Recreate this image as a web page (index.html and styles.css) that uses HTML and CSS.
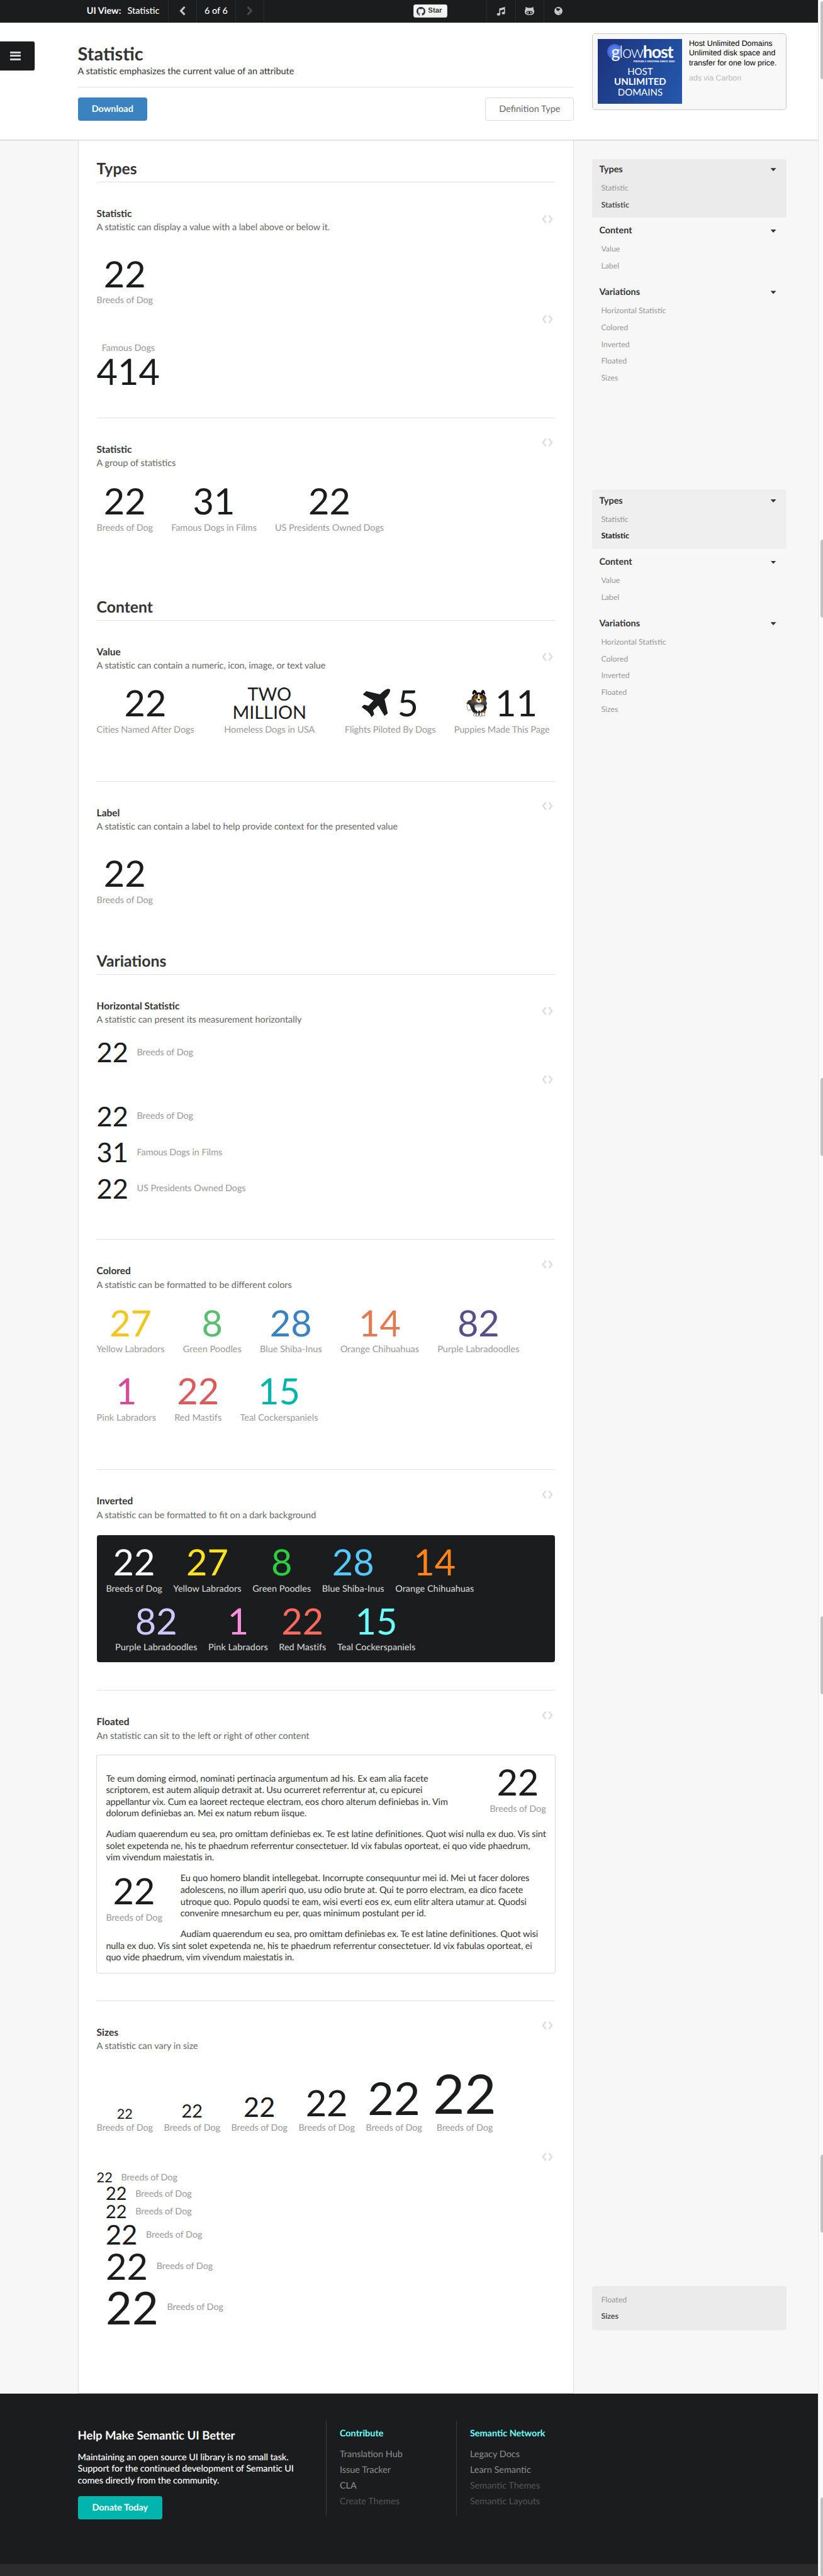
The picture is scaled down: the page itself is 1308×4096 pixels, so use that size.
FILE: index.html
```html
<!DOCTYPE html>
<html lang="en">
<head>
<meta charset="utf-8">
<title>Statistic | Semantic UI</title>
<link rel="stylesheet" href="styles.css">
</head>
<body>
<svg width="0" height="0" class="defs">
  <symbol id="code" viewBox="0 0 18 13"><path d="M6.700 .5 2 6.500l4.700 6M11.300 .5l4.700 6-4.700 6" fill="none" stroke="#dfdfdf" stroke-width="2.700"/></symbol>
</svg>
<div class="page">
  <nav class="topbar">
    <div class="view"><b>UI View:</b><span>Statistic</span></div>
    <div class="cell prev"><svg width="10" height="15" viewBox="0 0 10 15"><path d="M8.5 1 2.5 7.2l6 6.2" fill="none" stroke="#c9c9c9" stroke-width="3"/></svg></div>
    <div class="cell count">6 of 6</div>
    <div class="cell next"><svg width="10" height="15" viewBox="0 0 10 15"><path d="m1.5 1 6 6.2-6 6.2" fill="none" stroke="#4a4a4b" stroke-width="3"/></svg></div>
    <div class="star"><svg width="14" height="14" viewBox="0 0 16 16"><path fill="#333" d="M8 0C3.58 0 0 3.58 0 8c0 3.54 2.29 6.53 5.47 7.59.4.07.55-.17.55-.38 0-.19-.01-.82-.01-1.49-2.01.37-2.53-.49-2.69-.94-.09-.23-.48-.94-.82-1.13-.28-.15-.68-.52-.01-.53.63-.01 1.08.58 1.23.82.72 1.21 1.87.87 2.33.66.07-.52.28-.87.51-1.07-1.78-.2-3.64-.89-3.64-3.95 0-.87.31-1.59.82-2.15-.08-.2-.36-1.02.08-2.12 0 0 .67-.21 2.2.82.64-.18 1.32-.27 2-.27s1.36.09 2 .27c1.53-1.04 2.2-.82 2.2-.82.44 1.1.16 1.92.08 2.12.51.56.82 1.27.82 2.15 0 3.07-1.87 3.75-3.65 3.95.29.25.54.73.54 1.48 0 1.07-.01 1.93-.01 2.2 0 .21.15.46.55.38A8.01 8.01 0 0 0 16 8c0-4.42-3.58-8-8-8z"/></svg>Star</div>
    <div class="cell tool first"><svg width="14" height="14" viewBox="0 0 14 14"><path fill="#c9c9c9" d="M4.5 2.6 13.6 0v9.8a2.6 1.9 0 1 1-1.6-1.7V4L6.1 5.6v6.3a2.7 1.9 0 1 1-1.6-1.8z"/></svg></div>
    <div class="cell tool"><svg width="15" height="13" viewBox="0 0 15 13"><path fill="#c9c9c9" fill-rule="evenodd" d="M1.5 0 5 1.5h5L13.500 0l.5 3.700Q15 5 15 7.500 15 13 7.500 13T0 7.500Q0 5 1 3.700zM4.500 6.500Q2.500 6.500 2.500 9t5 2.800q5 0 5-2.800t-2-2.500z"/><path fill="#c9c9c9" d="M4.300 7.500h1.700v3h-1.700zM9 7.500h1.700v3H9z"/></svg></div>
    <div class="cell tool"><svg width="13" height="13" viewBox="0 0 13 13"><circle cx="6.500" cy="6.500" r="6.500" fill="#c9c9c9"/><path fill="#1b1c1d" d="m3 2.300 3-.5 1 1.200 2-.8.3 2-2.200 1.300L6.500 7 5.200 6 3.300 4.500zM8 9.500l1.700-.3L8.500 11.500z"/></svg></div>
  </nav>

  <header class="masthead">
    <button class="burger" aria-label="Menu"><i></i><i></i><i></i></button>
    <div class="intro">
      <h1>Statistic</h1>
      <p>A statistic emphasizes the current value of an attribute</p>
      <div class="actions"><a class="btn blue">Download</a><a class="btn outline">Definition Type</a></div>
    </div>
    <aside class="ad">
      <div class="banner">
        <div class="brand"><i class="orb"></i><span class="g">g</span><span class="low">low</span><b>host</b></div>
        <small>PROUDLY HOSTING SINCE 2002</small>
        <div class="pitch">HOST<b>UNLIMITED</b>DOMAINS</div>
      </div>
      <div class="copy">Host Unlimited Domains<br>Unlimited disk space and<br>transfer for one low price.<em>ads via Carbon</em></div>
    </aside>
  </header>

  <div class="body">
    <main>
      <h2>Types</h2>
      <section class="lead s1">
        <svg class="code"><use href="#code"/></svg>
        <h4>Statistic</h4><p class="desc">A statistic can display a value with a label above or below it.</p>
        <div class="stats"><div class="stat"><div class="value">22</div><div class="label">Breeds of Dog</div></div></div>
        <div class="again"><svg class="code"><use href="#code"/></svg>
          <div class="stats"><div class="stat above"><div class="label">Famous Dogs</div><div class="value">414</div></div></div></div>
      </section>
      <section class="s2">
        <svg class="code"><use href="#code"/></svg>
        <h4>Statistic</h4><p class="desc">A group of statistics</p>
        <div class="stats">
          <div class="stat"><div class="value">22</div><div class="label">Breeds of Dog</div></div>
          <div class="stat"><div class="value">31</div><div class="label">Famous Dogs in Films</div></div>
          <div class="stat"><div class="value">22</div><div class="label">US Presidents Owned Dogs</div></div>
        </div>
      </section>

      <h2>Content</h2>
      <section class="lead s3">
        <svg class="code"><use href="#code"/></svg>
        <h4>Value</h4><p class="desc">A statistic can contain a numeric, icon, image, or text value</p>
        <div class="stats">
          <div class="stat"><div class="value">22</div><div class="label">Cities Named After Dogs</div></div>
          <div class="stat wide"><div class="value text">TWO<br>MILLION</div><div class="label">Homeless Dogs in USA</div></div>
          <div class="stat"><div class="value"><svg class="plane" viewBox="23 65 264 266"><path fill="#1b1c1d" d="M265 66Q287 64 286 84 284 112 234 162L264 295 234 319 175 222 127 267 137 305 113 330Q95 294 75 278 50 258 23 240V234L44 215 84 225 131 176 34 120V116L64 88 191 118Q240 68 265 66Z"/></svg>5</div><div class="label">Flights Piloted By Dogs</div></div>
          <div class="stat"><div class="value"><svg class="dog" viewBox="995 76 196 254">
            <defs>
              <linearGradient id="chest" x2="0" y2="1"><stop offset="0" stop-color="#777"/><stop offset=".55" stop-color="#fff"/></linearGradient>
              <linearGradient id="tail" x2="0" y2="1"><stop offset="0" stop-color="#6b4212"/><stop offset=".5" stop-color="#222"/></linearGradient>
              <linearGradient id="coat" x2="0" y2="1"><stop offset="0" stop-color="#050505"/><stop offset=".4" stop-color="#555"/><stop offset=".6" stop-color="#222"/></linearGradient>
            </defs>
            <path fill="url(#tail)" d="M1045 170Q1012 172 1004 195L996 208 1006 212 1000 235 1050 262 1060 220Z"/>
            <path fill="#fff" stroke="#333" stroke-width="2" d="M1003 214 999 238 1006 236 1004 262 1012 256 1014 278 1024 262 1034 276 1030 262 1044 268 1030 226 1016 210Z"/>
            <path fill="url(#coat)" d="M1060 130Q1040 150 1044 180 1034 210 1045 240L1042 262 1058 290 1075 294 1112 318 1150 290 1168 284 1186 248 1180 225 1189 208 1178 175 1184 168Q1182 140 1165 128L1140 106 1085 106Z"/>
            <path fill="#0a0a0a" d="M1064 122 1050 118Q1054 84 1071 78L1090 90 1096 112ZM1164 130 1172 118Q1166 84 1150 78L1136 90 1130 112ZM1096 114 1104 100 1110 106 1114 99 1120 108 1128 114Z"/>
            <path fill="#e7a3a3" d="m1064 130 4-17 8-6 4 14zM1150 122l4-14 9 7 2 15z"/>
            <path fill="#a8660f" d="M1070 152Q1074 124 1096 126L1112 150 1128 126Q1150 128 1154 156 1156 182 1136 196H1086Q1066 182 1070 152Z"/>
            <path fill="#fff" d="M1107 118 1102 160Q1086 170 1090 186 1100 202 1114 200 1136 198 1136 180 1134 166 1122 160L1117 118Z"/>
            <circle cx="1090" cy="146" r="10"/><circle cx="1135" cy="146" r="10"/>
            <circle cx="1087" cy="143" r="3" fill="#fff"/><circle cx="1132" cy="143" r="3" fill="#fff"/>
            <ellipse cx="1112" cy="170" rx="10" ry="8"/><path fill="none" stroke="#222" stroke-width="3" d="M1101 182q6 8 11 0 5 8 11 0"/>
            <path fill="url(#chest)" d="M1072 224Q1112 196 1160 224 1162 250 1144 270L1136 266 1130 284 1112 270 1102 288 1094 272 1084 270Q1068 246 1072 224Z"/>
            <path fill="#b8720f" d="m1064 286 12 6 12 0 2 14-24 8zM1140 286l26-8 10-14-4 32-24 8z"/>
            <path fill="#fff" stroke="#222" stroke-width="3" d="M1068 300 1062 320 1084 322 1088 294 1092 292 1088 324 1108 326 1111 292ZM1119 292 1120 326 1138 326 1138 296 1142 320 1168 322 1168 312 1162 290Z"/>
          </svg>11</div><div class="label">Puppies Made This Page</div></div>
        </div>
      </section>
      <section class="s4">
        <svg class="code"><use href="#code"/></svg>
        <h4>Label</h4><p class="desc">A statistic can contain a label to help provide context for the presented value</p>
        <div class="stats"><div class="stat"><div class="value">22</div><div class="label">Breeds of Dog</div></div></div>
      </section>

      <h2>Variations</h2>
      <section class="lead s5">
        <svg class="code"><use href="#code"/></svg>
        <h4>Horizontal Statistic</h4><p class="desc">A statistic can present its measurement horizontally</p>
        <div class="hstat"><div class="value">22</div><div class="label">Breeds of Dog</div></div>
        <div class="again"><svg class="code"><use href="#code"/></svg>
          <div class="hstats">
            <div class="hstat"><div class="value">22</div><div class="label">Breeds of Dog</div></div>
            <div class="hstat"><div class="value">31</div><div class="label">Famous Dogs in Films</div></div>
            <div class="hstat"><div class="value">22</div><div class="label">US Presidents Owned Dogs</div></div>
          </div></div>
      </section>
      <section class="s6">
        <svg class="code"><use href="#code"/></svg>
        <h4>Colored</h4><p class="desc">A statistic can be formatted to be different colors</p>
        <div class="stats">
          <div class="stat yellow"><div class="value">27</div><div class="label">Yellow Labradors</div></div>
          <div class="stat green"><div class="value">8</div><div class="label">Green Poodles</div></div>
          <div class="stat bluec"><div class="value">28</div><div class="label">Blue Shiba-Inus</div></div>
          <div class="stat orange"><div class="value">14</div><div class="label">Orange Chihuahuas</div></div>
          <div class="stat purple"><div class="value">82</div><div class="label">Purple Labradoodles</div></div>
          <div class="stat pink"><div class="value">1</div><div class="label">Pink Labradors</div></div>
          <div class="stat red"><div class="value">22</div><div class="label">Red Mastifs</div></div>
          <div class="stat teal"><div class="value">15</div><div class="label">Teal Cockerspaniels</div></div>
        </div>
      </section>
      <section class="s7">
        <svg class="code"><use href="#code"/></svg>
        <h4>Inverted</h4><p class="desc">A statistic can be formatted to fit on a dark background</p>
        <div class="dark">
          <div class="stats">
            <div class="stat"><div class="value">22</div><div class="label">Breeds of Dog</div></div>
            <div class="stat yellow"><div class="value">27</div><div class="label">Yellow Labradors</div></div>
            <div class="stat green"><div class="value">8</div><div class="label">Green Poodles</div></div>
            <div class="stat bluec"><div class="value">28</div><div class="label">Blue Shiba-Inus</div></div>
            <div class="stat orange"><div class="value">14</div><div class="label">Orange Chihuahuas</div></div>
          </div>
          <div class="stats indent">
            <div class="stat purple"><div class="value">82</div><div class="label">Purple Labradoodles</div></div>
            <div class="stat pink"><div class="value">1</div><div class="label">Pink Labradors</div></div>
            <div class="stat red"><div class="value">22</div><div class="label">Red Mastifs</div></div>
            <div class="stat teal"><div class="value">15</div><div class="label">Teal Cockerspaniels</div></div>
          </div>
        </div>
      </section>
      <section class="s8">
        <svg class="code"><use href="#code"/></svg>
        <h4>Floated</h4><p class="desc">An statistic can sit to the left or right of other content</p>
        <div class="segment">
          <div class="stat right"><div class="value">22</div><div class="label">Breeds of Dog</div></div>
          <p>Te eum doming eirmod, nominati pertinacia argumentum ad his. Ex eam alia facete<br>scriptorem, est autem aliquip detraxit at. Usu ocurreret referrentur at, cu epicurei<br>appellantur vix. Cum ea laoreet recteque electram, eos choro alterum definiebas in. Vim<br>dolorum definiebas an. Mei ex natum rebum iisque.</p>
          <p>Audiam quaerendum eu sea, pro omittam definiebas ex. Te est latine definitiones. Quot wisi nulla ex duo. Vis sint<br>solet expetenda ne, his te phaedrum referrentur consectetuer. Id vix fabulas oporteat, ei quo vide phaedrum,<br>vim vivendum maiestatis in.</p>
          <div class="stat left"><div class="value">22</div><div class="label">Breeds of Dog</div></div>
          <p>Eu quo homero blandit intellegebat. Incorrupte consequuntur mei id. Mei ut facer dolores<br>adolescens, no illum aperiri quo, usu odio brute at. Qui te porro electram, ea dico facete<br>utroque quo. Populo quodsi te eam, wisi everti eos ex, eum elitr altera utamur at. Quodsi<br>convenire mnesarchum eu per, quas minimum postulant per id.</p>
          <p>Audiam quaerendum eu sea, pro omittam definiebas ex. Te est latine definitiones. Quot wisi<br>nulla ex duo. Vis sint solet expetenda ne, his te phaedrum referrentur consectetuer. Id vix fabulas oporteat, ei<br>quo vide phaedrum, vim vivendum maiestatis in.</p>
        </div>
      </section>
      <section class="s9">
        <svg class="code"><use href="#code"/></svg>
        <h4>Sizes</h4><p class="desc">A statistic can vary in size</p>
        <div class="stats sizes">
          <div class="stat mini"><div class="value">22</div><div class="label">Breeds of Dog</div></div>
          <div class="stat tiny"><div class="value">22</div><div class="label">Breeds of Dog</div></div>
          <div class="stat small"><div class="value">22</div><div class="label">Breeds of Dog</div></div>
          <div class="stat"><div class="value">22</div><div class="label">Breeds of Dog</div></div>
          <div class="stat large"><div class="value">22</div><div class="label">Breeds of Dog</div></div>
          <div class="stat huge"><div class="value">22</div><div class="label">Breeds of Dog</div></div>
        </div>
        <div class="again"><svg class="code"><use href="#code"/></svg>
          <div class="stack">
            <div class="hstat mini"><div class="value">22</div><div class="label">Breeds of Dog</div></div>
            <div class="hstat tiny"><div class="value">22</div><div class="label">Breeds of Dog</div></div>
            <div class="hstat tiny"><div class="value">22</div><div class="label">Breeds of Dog</div></div>
            <div class="hstat small"><div class="value">22</div><div class="label">Breeds of Dog</div></div>
            <div class="hstat medium"><div class="value">22</div><div class="label">Breeds of Dog</div></div>
            <div class="hstat large"><div class="value">22</div><div class="label">Breeds of Dog</div></div>
          </div></div>
      </section>
    </main>

    <aside class="side">
      <div class="menu">
        <div class="group on"><div class="head">Types<i></i></div><a>Statistic</a><a class="cur">Statistic</a></div>
        <div class="group"><div class="head">Content<i></i></div><a>Value</a><a>Label</a></div>
        <div class="group"><div class="head">Variations<i></i></div><a>Horizontal Statistic</a><a>Colored</a><a>Inverted</a><a>Floated</a><a>Sizes</a></div>
      </div>
      <div class="menu second">
        <div class="group on"><div class="head">Types<i></i></div><a>Statistic</a><a class="cur">Statistic</a></div>
        <div class="group"><div class="head">Content<i></i></div><a>Value</a><a>Label</a></div>
        <div class="group"><div class="head">Variations<i></i></div><a>Horizontal Statistic</a><a>Colored</a><a>Inverted</a><a>Floated</a><a>Sizes</a></div>
      </div>
      <div class="menu tail"><a>Floated</a><a class="cur">Sizes</a></div>
    </aside>
  </div>

  <footer>
    <div class="help"><h3>Help Make Semantic UI Better</h3>
      <p>Maintaining an open source UI library is no small task.<br>Support for the continued development of Semantic UI<br>comes directly from the community.</p>
      <a class="btn tealbtn">Donate Today</a></div>
    <div class="links"><h5>Contribute</h5><a>Translation Hub</a><a>Issue Tracker</a><a>CLA</a><a class="off">Create Themes</a></div>
    <div class="links"><h5>Semantic Network</h5><a>Legacy Docs</a><a>Learn Semantic</a><a class="off">Semantic Themes</a><a class="off">Semantic Layouts</a></div>
  </footer>
  <div class="strip"></div>
</div>
<div class="gutter"><i></i><i></i><i></i><i></i><i></i><i></i></div>
</body>
</html>
```
FILE: styles.css
```css
* { box-sizing: border-box; }
html, body { margin: 0; }
body {
  display: flex; width: 1308px; height: 4096px; overflow: hidden;
  font: 14.44px/20px Lato, "Liberation Sans", sans-serif; color: #333; background: #fff;
  text-rendering: geometricPrecision;
}
h1, h2, h3, h4, h5, p { margin: 0; }
.defs { position: absolute; }
.page { width: 1300px; display: flex; flex-direction: column; }

/* top bar */
.topbar { height: 36px; background: #1b1c1d; color: #fff; display: flex; align-items: center; padding-left: 137.8px; font-weight: 500; border-bottom: 1px solid #121314; }
.view { width: 129.4px; display: flex; gap: 10px; }
.cell { height: 36px; border-left: 1px solid #2b2c2d; display: flex; align-items: center; justify-content: center; }
.prev { width: 44.5px; }
.count { width: 62.6px; }
.next { width: 46px; border-right: 1px solid #2b2c2d; }
.star { margin-left: 237px; width: 54px; height: 21px; border: 1px solid #d4d4d4; border-radius: 3px; background: linear-gradient(#fcfcfc, #eee); color: #333; font: bold 11.4px/19px "Liberation Sans", Arial, sans-serif; display: flex; align-items: center; gap: 4px; padding-left: 4px; }
.tool { width: 45.3px; }
.tool.first { margin-left: 62px; }

/* masthead */
.masthead { position: relative; z-index: 1; height: 187px; background: #fff; border-bottom: 1px solid #d8d8d8; box-shadow: 0 1px 2px rgba(0,0,0,.08); display: flex; padding-left: 123.6px; }
.burger { position: absolute; left: 0; top: 28.5px; width: 56px; height: 48.5px; border: 1px solid #ddd; border-left: 0; border-radius: 0 4px 4px 0; background: #1b1c1d; padding: 0 0 0 16px; display: flex; flex-direction: column; justify-content: center; gap: 2.2px; }
.burger i { width: 16.5px; height: 3.2px; background: #d0d3d2; border-radius: .5px; }
.intro { width: 788.8px; padding-top: 31.7px; }
h1 { font-size: 28.87px; line-height: 36px; }
.intro p { height: 35px; padding-top: .3px; border-bottom: 1px solid #e2e2e2; }
.actions { display: flex; justify-content: space-between; padding-top: 16px; }
.btn { display: inline-block; height: 37px; line-height: 37px; border-radius: 4px; text-align: center; font-weight: bold; color: #fff; }
.blue { width: 110.4px; background: #3b83c0; }
.outline { width: 141px; border: 1px solid #dcdcdc; line-height: 35px; color: #666; font-weight: normal; }
.ad { margin: 16.5px 0 0 29px; width: 309px; height: 122px; border: 1.5px solid #c8c8c8; border-radius: 5px; background: #f8f8f8; padding: 8px; display: flex; gap: 10.5px; font-family: "Liberation Sans", Arial, sans-serif; }
.banner { width: 134px; height: 103.5px; background: linear-gradient(120deg, #1d3178, #214b9c 60%, #2558ac); color: #fff; text-align: center; font-family: Lato, sans-serif; }
.brand { position: relative; height: 33px; display: flex; justify-content: center; align-items: flex-end; font-size: 27px; line-height: 27px; letter-spacing: -1.3px; padding-left: 6px; }
.brand .low { font-weight: 300; }
.orb { position: absolute; left: 15px; top: 8px; width: 24px; height: 24px; border-radius: 50%; background: radial-gradient(#6e94ff, #2c50c8); }
.brand span, .brand b { z-index: 1; }
.banner small { display: block; height: 6px; font: bold 4.3px/6px "Open Sans", sans-serif; text-align: right; padding-right: 12px; }
.pitch { padding-top: 5px; font-size: 15px; line-height: 16.7px; }
.pitch b { display: block; }
.copy { color: #000; font-size: 12.37px; line-height: 15.5px; white-space: nowrap; }
.copy em { display: block; font-style: normal; color: #bbb; margin-top: 9px; }

/* body */
.body { height: 3583px; background: #f7f7f7; display: flex; padding-left: 123.6px; }
main { width: 788.8px; background: #fff; border: solid #dcdcdc; border-width: 0 1px 1px; padding: 31px 29px 0; }
h2 { height: 36px; font-size: 24.75px; line-height: 30px; border-bottom: 1px solid #e2e2e2; }
section { position: relative; padding-top: 40px; border-bottom: 1px solid #e2e2e2; }
.s2, .s4, .s9 { border: 0; }
.code { position: absolute; right: 3.5px; top: 32.3px; width: 18px; height: 13px; }
.lead > .code { top: 51.6px; }
h4 { font-size: 15.47px; line-height: 20px; }
.desc { margin-top: 2.3px; color: #666; }
.s1 .desc, .s3 .desc, .s4 .desc { letter-spacing: -.065px; }
.stats { display: flex; flex-wrap: wrap; column-gap: 29.2px; }
.stat { text-align: center; }
.value { font-size: 57.75px; line-height: 57.7px; color: #1b1c1d; }
.label { margin-top: 3.7px; color: #999; letter-spacing: -.08px; white-space: nowrap; }
.again { position: relative; }
.again .code { top: -.5px; }

.s1 { height: 375px; }
.s1 > .stats { margin-top: 34.7px; }
.s1 .again { margin-top: 13px; padding-top: 42.5px; }
.above .label { margin: 0; }
.above .value { margin-top: -1.5px; }
.s2 { height: 285.5px; }
.s2 > .stats { margin-top: 21px; }
.s3 { height: 256.5px; }
.s3 > .stats { margin-top: 20.5px; }
.wide { width: 181px; }
.s3 .value { display: flex; justify-content: center; height: 57.7px; }
.s3 .value.text { display: block; font-size: 28.87px; line-height: 29px; padding-top: .5px; }
.plane { width: 45.4px; height: 45.4px; margin: 5.5px 10.7px 0 0; }
.dog { width: 33.5px; height: 44px; margin: 7px 12.5px 0 0; }
.s4 { height: 270.7px; }
.s4 > .stats { margin-top: 35px; }

.hstat { display: flex; align-items: center; }
.hstat .value { font-size: 43.3px; line-height: 43.3px; }
.hstat .label { margin: 0 0 0 13.7px; }
.s5 { height: 421.6px; }
.s5 > .hstat { margin-top: 20.5px; }
.s5 .again { margin-top: 14.5px; padding-top: 43.5px; }
.hstats { display: grid; row-gap: 14.2px; }
.s6 { height: 366px; }
.s6 > .stats { margin-top: 21px; row-gap: 27.2px; }
.s6 .label { letter-spacing: .04px; }
.yellow .value { color: #f2c61f; }
.green .value { color: #5bbd72; }
.bluec .value { color: #3b83c0; }
.orange .value { color: #e07b53; }
.purple .value { color: #564f8a; }
.pink .value { color: #d9499a; }
.red .value { color: #d95c5c; }
.teal .value { color: #00b5ad; }

.s7 { height: 351px; }
.dark { margin-top: 21.8px; height: 202px; background: #1b1c1d; border-radius: 4px; padding: 14px 14.8px; display: flex; flex-direction: column; row-gap: 12.3px; }
.dark .stats { column-gap: 17.6px; }
.indent { padding-left: 14.6px; }
.dark .value { color: #fff; }
.dark .label { color: #cfcfcf; font-weight: 500; letter-spacing: .02px; }
.dark .stat:not([class*=" "]) .label { letter-spacing: -.1px; }
.dark .yellow .value { color: #ffe21f; }
.dark .green .value { color: #2ecc40; }
.dark .bluec .value { color: #54c8ff; }
.dark .orange .value { color: #ff851b; }
.dark .purple .value { color: #cdc6ff; }
.dark .pink .value { color: #ff8edf; }
.dark .red .value { color: #ff695e; }
.dark .teal .value { color: #6dffff; }

.s8 { height: 493.5px; }
.segment { margin: 19.5px -1px 0; height: 348.4px; border: 1px solid #d8d8d8; border-radius: 4px; padding: 14.1px 0 0 14.8px; line-height: 18.56px; }
.segment p { margin: 14.44px 0 0; letter-spacing: -.08px; }
.segment .stat { line-height: 20px; }
.stat.right { float: right; margin: 0 14.8px 14.44px 20px; }
.stat.left { float: left; margin: 14.44px 28.87px 14.44px 0; }

.s9 > .stats { margin-top: 21.7px; align-items: flex-end; column-gap: 17.5px; }
.sizes .label { margin-top: 2.1px; }
.mini .value { font-size: 21.65px; line-height: 21.65px; }
.tiny .value { font-size: 28.87px; line-height: 28.87px; }
.small .value { font-size: 43.3px; line-height: 43.3px; }
.medium .value { font-size: 57.75px; line-height: 57.7px; }
.large .value { font-size: 72.2px; line-height: 72.2px; }
.huge .value { font-size: 86.6px; line-height: 86.6px; }
.s9 .again { margin-top: 29px; padding-top: 29px; }
.stack .hstat + .hstat { margin-left: 14.44px; }

/* side menus */
.side { margin-left: 28.2px; width: 309px; padding-top: 29.5px; }
.menu { display: flex; flex-direction: column; gap: 4px; }
.group { padding: 7.3px 12px 6.6px 14.8px; border-radius: 4px; }
.group.on, .tail { background: #ebebeb; }
.head { display: flex; justify-content: space-between; align-items: center; font-weight: bold; margin: 0 4px 6.1px -3px; }
.head i { width: 9px; height: 5px; background: #333; clip-path: polygon(0 0, 100% 0, 50% 100%); }
.menu a { display: block; font-size: 12.37px; line-height: 26.8px; color: #999; }
.menu a.cur { font-weight: bold; color: #555; }
.menu.second { margin-top: 157.6px; }
.second .group.on { background: #efefef; }
.second a.cur { color: #1b1c1d; }
.menu.tail { margin-top: 2486.5px; height: 70px; border-radius: 4px; padding: 9px 14.8px; gap: 0; }
.tail a { line-height: 26.4px; }

/* footer */
footer { height: 271px; background: #1b1c1d; color: #fff; padding: 43.2px 0 0 123.6px; display: flex; align-items: flex-start; }
.help { width: 394.8px; padding-top: 11.2px; }
h3 { font-size: 18.56px; line-height: 24px; letter-spacing: -.03px; }
.help p { margin-top: 14.5px; line-height: 18.56px; font-weight: 500; letter-spacing: -.09px; }
.tealbtn { margin-top: 14.2px; width: 134.4px; background: #00b5ad; }
.links { width: 207px; height: 150.4px; border-left: 1px solid #3c3d3e; padding: 10.9px 0 0 20.5px; }
h5 { font-size: 14.44px; line-height: 20px; color: #6dffff; margin-bottom: 9.5px; }
.links a { display: block; line-height: 25.1px; color: #8f8f90; }
.links a.off { color: #555657; }
.strip { height: 19px; background: #2c2c2c; }

/* scroll track */
.gutter { width: 8px; background: #fafafa; border-left: 1px solid #e7e7e7; padding: 2px 0 0 3px; display: flex; flex-direction: column; gap: 732px; }
.gutter i { flex: none; height: 124px; background: #c1c1c1; border-radius: 4px 0 0 4px; }
.gutter i:last-child { margin-top: -311px; height: 126px; }
```
